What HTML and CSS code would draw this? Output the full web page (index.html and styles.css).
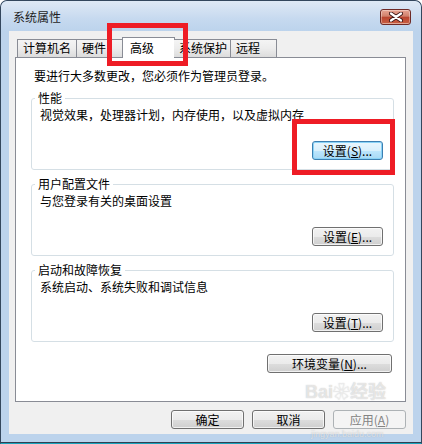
FILE: index.html
```html
<!DOCTYPE html>
<html lang="zh-CN">
<head>
<meta charset="utf-8">
<title>系统属性</title>
<link rel="stylesheet" href="styles.css">
</head>
<body>
<div class="window">
  <div class="titlebar">
    <span class="title">系统属性</span>
    <button class="close" aria-label="关闭">
      <svg width="14" height="10" viewBox="0 0 14 10">
        <path d="M2 1.5 L12 8.5 M12 1.5 L2 8.5" stroke="#3a1515" stroke-width="4" stroke-linecap="round"/>
        <path d="M2 1.5 L12 8.5 M12 1.5 L2 8.5" stroke="#ffffff" stroke-width="2.2" stroke-linecap="round"/>
      </svg>
    </button>
  </div>
  <div class="client">
    <div class="tabs">
      <div class="tab tab-name">计算机名</div>
      <div class="tab tab-hw">硬件</div>
      <div class="tab tab-adv active">高级</div>
      <div class="tab tab-prot">系统保护</div>
      <div class="tab tab-remote">远程</div>
    </div>
    <div class="panel">
      <p class="intro">要进行大多数更改，您必须作为管理员登录。</p>
      <fieldset class="group">
        <legend>性能</legend>
        <p class="desc">视觉效果，处理器计划，内存使用，以及虚拟内存</p>
        <div class="row"><button class="btn default">设置(<u>S</u>)...</button></div>
      </fieldset>
      <fieldset class="group">
        <legend>用户配置文件</legend>
        <p class="desc">与您登录有关的桌面设置</p>
        <div class="row"><button class="btn">设置(<u>E</u>)...</button></div>
      </fieldset>
      <fieldset class="group">
        <legend>启动和故障恢复</legend>
        <p class="desc">系统启动、系统失败和调试信息</p>
        <div class="row"><button class="btn">设置(<u>T</u>)...</button></div>
      </fieldset>
      <div class="row env"><button class="btn wide">环境变量(<u>N</u>)...</button></div>
    </div>
    <div class="footer">
      <button class="btn dlg">确定</button>
      <button class="btn dlg">取消</button>
      <button class="btn dlg" disabled>应用(<u>A</u>)</button>
    </div>
  </div>
  <div class="mark mark-tab"></div>
  <div class="mark mark-btn"></div>
  <div class="watermark">
    <span class="wm-big">Bai<span class="paw">❀</span>经验</span>
    <span class="wm-small">jingyan.baidu.com</span>
  </div>
</div>
</body>
</html>
```
FILE: styles.css
```css
html, body {
  margin: 0;
  background: #ffffff;
}
body {
  font-family: "Noto Sans CJK SC", "Noto Sans", sans-serif;
  font-size: 12px;
  color: #000;
}
.window {
  position: relative;
  width: 422px;
  height: 444px;
  box-sizing: border-box;
  border: 1px solid #34475d;
  border-bottom-color: #1aa3bb;
  border-radius: 7px 7px 0 0;
  background: #bcd3ec;
  box-shadow: inset 0 -1px 0 #2f3f52;
  padding: 0 8px 9px 8px;
  display: flex;
  flex-direction: column;
  overflow: hidden;
}
.titlebar {
  height: 30px;
  margin: 0 -8px;
  padding: 0 10px 0 12px;
  display: flex;
  align-items: center;
  justify-content: space-between;
  background: linear-gradient(#dfe9f5, #c6d9ef 60%, #bcd3ec);
  border-radius: 6px 6px 0 0;
}
.title {
  font-size: 12px;
  color: #1e1e1e;
  line-height: 14px;
  margin-top: 1px;
}
.close {
  width: 31px;
  height: 16px;
  margin-top: 2px;
  padding: 0;
  border: 1px solid #6e2a26;
  border-radius: 3px;
  background: linear-gradient(#e8a493, #d0806b 45%, #b9432e 50%, #c65a3f 90%, #d88a6d);
  display: flex;
  align-items: center;
  justify-content: center;
  box-shadow: inset 0 0 0 1px rgba(255,255,255,0.35);
}
.client {
  flex: 1;
  background: #f0f0f0;
  padding: 6px 7px 0 6px;
  display: flex;
  flex-direction: column;
}
.tabs {
  display: flex;
  align-items: flex-end;
  height: 20px;
  padding-left: 2px;
  position: relative;
  z-index: 1;
}
.tab {
  box-sizing: border-box;
  height: 18px;
  border: 1px solid #898c95;
  border-bottom: none;
  background: linear-gradient(#f4f4f4, #ececec 50%, #dcdcdc);
  padding-left: 5px;
  line-height: 16px;
  white-space: nowrap;
}
.tab + .tab {
  border-left: none;
}
.tab-name { width: 60px; }
.tab-hw { width: 46px; }
.tab-adv { width: 53px; }
.tab-prot { width: 57px; }
.tab-remote { width: 46px; border-right: 1px solid #898c95; }
.tab.active {
  height: 21px;
  margin-bottom: -1px;
  background: #ffffff;
  border-left: 1px solid #898c95;
  margin-left: -1px;
  margin-right: -1px;
  padding-left: 7px;
  line-height: 19px;
}
.tab.active + .tab {
  border-left: none;
}
.panel {
  box-sizing: border-box;
  height: 345px;
  border: 1px solid #898c95;
  background: #ffffff;
  padding: 11px 11px 0 15px;
}
.intro {
  margin: 0;
  padding-left: 3px;
  line-height: 14px;
}
.group {
  margin: 7px 0 0 0;
  padding: 2px 10px 9px 8px;
  border: 1px solid #d5dfe5;
  border-radius: 3px;
  min-width: 0;
}
.group + .group {
  margin-top: 6px;
}
.group legend {
  margin-left: -5px;
  padding: 0 3px;
  line-height: 16px;
}
.desc {
  margin: 0;
  line-height: 14px;
}
.row {
  display: flex;
  justify-content: flex-end;
  margin-top: 19px;
}
.btn {
  box-sizing: border-box;
  height: 19px;
  width: 71px;
  padding: 0;
  font-family: inherit;
  font-size: 12px;
  line-height: 16px;
  color: #000;
  border: 1px solid #707070;
  border-radius: 3px;
  background: linear-gradient(#f2f2f2, #ebebeb 50%, #dddddd 51%, #cfcfcf);
  box-shadow: inset 0 0 0 1px rgba(255,255,255,0.7);
}
.btn u {
  text-decoration: underline;
}
.btn.default {
  border-color: #3c7fb1;
  background: linear-gradient(#eaf6fd, #d9f0fc 50%, #bee6fd 51%, #a7d9f5);
  box-shadow: inset 0 0 0 1px #8ad3f7;
}
.env {
  margin-top: 12px;
  padding-right: 2px;
}
.btn.wide {
  width: 125px;
}
.footer {
  display: flex;
  justify-content: flex-end;
  gap: 8px;
  margin-top: 8px;
  padding-right: 0;
}
.btn.dlg {
  width: 73px;
}
.btn:disabled {
  color: #838383;
  border-color: #adb2b5;
  background: #f4f4f4;
  box-shadow: none;
}
.mark {
  position: absolute;
  border: 5px solid #ee1c25;
  pointer-events: none;
  z-index: 5;
}
.mark-tab {
  left: 106px;
  top: 22px;
  width: 71px;
  height: 33px;
}
.mark-btn {
  left: 291px;
  top: 118px;
  width: 93px;
  height: 46px;
}
.watermark {
  position: absolute;
  left: 304px;
  top: 382px;
  display: flex;
  flex-direction: column;
  align-items: flex-start;
  gap: 28px;
  z-index: 4;
  pointer-events: none;
}
.wm-big {
  font-family: "Liberation Sans", "Noto Sans CJK SC", sans-serif;
  font-size: 18px;
  font-weight: bold;
  line-height: 18px;
  color: rgba(255,255,255,0.6);
  text-shadow: 0 0 1px rgba(120,120,120,0.5);
}
.paw {
  font-size: 17px;
}
.wm-small {
  font-family: "Liberation Sans", sans-serif;
  font-size: 9px;
  line-height: 9px;
  color: rgba(255,255,255,0.6);
  text-shadow: 0 0 1px rgba(120,120,120,0.45);
  margin-left: 6px;
}
```
